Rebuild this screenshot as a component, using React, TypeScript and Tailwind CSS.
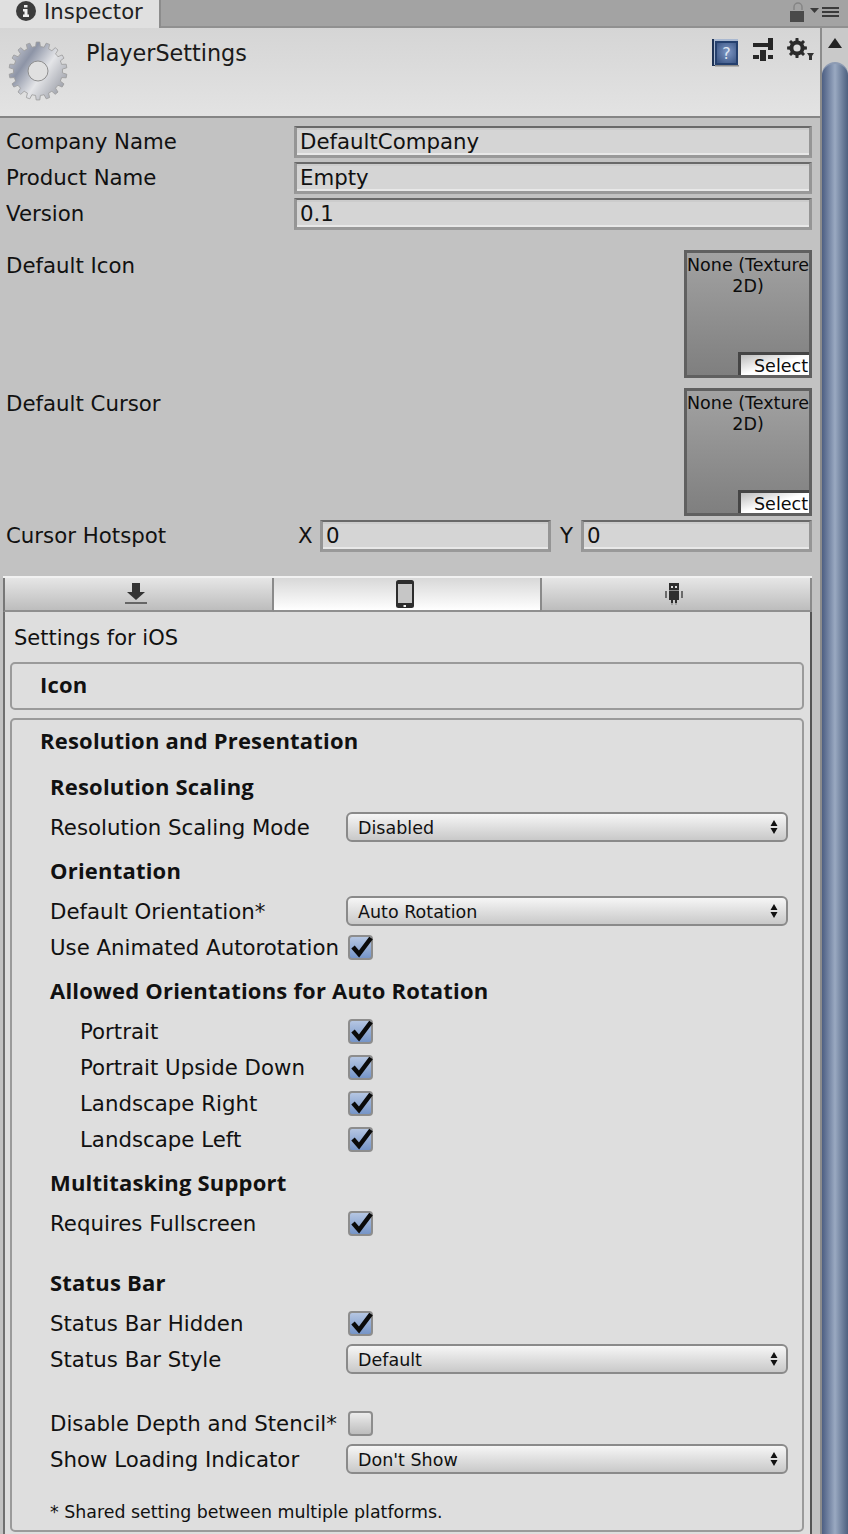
const font = { fontFamily: '"DejaVu Sans", sans-serif' };
const boldFont = { fontFamily: '"Open Sans", "DejaVu Sans", sans-serif' };

// gear outline, teeth around a ring
function gearPath(cx: number, cy: number, outer: number, inner: number, teeth: number) {
  const pts: string[] = [];
  const step = (Math.PI * 2) / teeth;
  for (let i = 0; i < teeth; i++) {
    const a = i * step - Math.PI / 2;
    const list: [number, number][] = [
      [inner, a - step * 0.5],
      [inner, a - step * 0.28],
      [outer, a - step * 0.18],
      [outer, a + step * 0.18],
      [inner, a + step * 0.28],
    ];
    for (const [r, t] of list) {
      pts.push(`${(cx + r * Math.cos(t)).toFixed(2)},${(cy + r * Math.sin(t)).toFixed(2)}`);
    }
  }
  return "M" + pts.join("L") + "Z";
}

function BigGear() {
  return (
    <svg width="60" height="60" viewBox="0 0 60 60">
      <defs>
        <linearGradient id="gearFill" x1="0" y1="0" x2="1" y2="0.7">
          <stop offset="0" stopColor="#d8d9de" />
          <stop offset="0.35" stopColor="#8d94a6" />
          <stop offset="0.65" stopColor="#e4e5e8" />
          <stop offset="1" stopColor="#a0a3ac" />
        </linearGradient>
      </defs>
      <path d={gearPath(30, 30, 29, 24.5, 18)} fill="url(#gearFill)" stroke="#9a9a9a" strokeWidth="0.8" />
      <circle cx="30" cy="30" r="10" fill="#e0e0e0" stroke="#8f8f8f" strokeWidth="1" />
    </svg>
  );
}

function SmallGear() {
  return (
    <svg width="30" height="24" viewBox="0 0 30 24">
      <path d={gearPath(10, 10, 10, 7.5, 8)} fill="#2b2b2b" />
      <circle cx="10" cy="10" r="3.6" fill="#dcdcdc" />
      <path d="M20 15h7l-2 3v4h-3v-4z" fill="#333" />
    </svg>
  );
}

function InfoIcon() {
  return (
    <svg width="22" height="22" viewBox="0 0 22 22">
      <circle cx="11" cy="10" r="10" fill="#3c3c3c" />
      <path d="M9 4h3.500v2.400H9zM8 8h4.500v5.500H14V16H8v-2.500h1.500v-3H8z" fill="#f0f0f0" />
    </svg>
  );
}

function HelpBook() {
  return (
    <svg width="28" height="30" viewBox="0 0 28 30">
      <defs>
        <radialGradient id="bookFill" cx="0.55" cy="0.45" r="0.7">
          <stop offset="0" stopColor="#7e98c6" />
          <stop offset="1" stopColor="#3c5685" />
        </radialGradient>
      </defs>
      <rect x="0" y="1" width="26" height="27" fill="#1f3355" />
      <rect x="2" y="1" width="24" height="26" fill="#a9b8d0" />
      <rect x="3" y="3" width="23" height="24" fill="#25406e" />
      <rect x="5" y="5" width="19" height="20" fill="url(#bookFill)" />
      <text x="14.500" y="21" fontSize="16" textAnchor="middle" fill="#dfe6f0" style={font}>?</text>
      <rect x="3" y="27" width="24" height="1.500" fill="#8a8a8a" />
    </svg>
  );
}

function SlidersIcon() {
  return (
    <svg width="20" height="24" viewBox="0 0 20 24">
      <path d="M0 5h15v4H0zM15 0h5v12h-5zM0 17h6v4H0zM15 17h5v4h-5zM7 12h6v11H7z" fill="#262626" />
    </svg>
  );
}

function LockIcon() {
  return (
    <svg width="16" height="20" viewBox="0 0 16 20">
      <path d="M5 8V5a4 4 0 0 1 8 0v3" fill="none" stroke="#858585" strokeWidth="1.500" />
      <rect x="1" y="9" width="14" height="11" fill="#4a4a4a" />
    </svg>
  );
}

function MenuIcon() {
  return (
    <svg width="30" height="12" viewBox="0 0 30 12">
      <path d="M0 2h9L4.500 7z" fill="#3a3a3a" />
      <path d="M12 1h17v2H12zM12 5h17v2H12zM12 9h17v2H12z" fill="#3a3a3a" />
    </svg>
  );
}

function DownloadIcon() {
  return (
    <svg width="24" height="24" viewBox="0 0 24 24">
      <path d="M8 1h8v9h5l-9 8-9-8h5z" fill="#333" />
      <rect x="1" y="20" width="22" height="2" fill="#666" />
    </svg>
  );
}

function PhoneIcon() {
  return (
    <svg width="20" height="30" viewBox="0 0 20 30">
      <rect x="1" y="1" width="18" height="28" rx="2.500" fill="#2d2d2d" />
      <rect x="3" y="5" width="14" height="19" fill="#c6c6c6" />
      <rect x="8.500" y="26" width="2.500" height="2" fill="#f2f2f2" />
    </svg>
  );
}

function AndroidIcon() {
  return (
    <svg width="18" height="22" viewBox="0 0 18 22" shapeRendering="crispEdges">
      <rect x="4" y="0" width="10" height="7" fill="#2e2e2e" />
      <rect x="6" y="3" width="2" height="2" fill="#e0e0e0" />
      <rect x="10" y="3" width="2" height="2" fill="#e0e0e0" />
      <rect x="4" y="7" width="10" height="1" fill="#8a8a8a" />
      <rect x="4" y="8" width="10" height="9" fill="#2e2e2e" />
      <rect x="0" y="8" width="2" height="7" fill="#6a6a6a" />
      <rect x="16" y="8" width="2" height="7" fill="#6a6a6a" />
      <rect x="6" y="17" width="2" height="3" fill="#2e2e2e" />
      <rect x="10" y="17" width="2" height="3" fill="#2e2e2e" />
      <rect x="6" y="20" width="2" height="2" fill="#a0a0a0" />
      <rect x="10" y="20" width="2" height="2" fill="#a0a0a0" />
    </svg>
  );
}

function Field({ value, className }: { value: string; className: string }) {
  return (
    <div className={`h-8 border-[3px] border-t-2 border-t-[#696969] border-x-[#959595] border-b-[#999999] bg-[#d5d5d5] shadow-[inset_0_-2px_0_#e8e8e8,inset_0_2px_0_#cccccc] pl-[3px] flex items-center text-[21.3px] leading-[24px] text-[#111] ${className}`}>
      {value}
    </div>
  );
}

function ObjectPicker() {
  return (
    <div className="w-32 h-32 border-[3px] border-[#606060] bg-gradient-to-b from-[#a2a2a2] to-[#7f7f7f] flex flex-col text-[17.5px] leading-[21px] text-center text-[#0c0c0c] relative overflow-hidden">
      <div className="pt-[2px] whitespace-nowrap">None (Texture</div>
      <div>2D)</div>
      <div className="absolute right-0 bottom-0 w-[71px] h-[23px] border-t-[3px] border-l-[3px] border-[#454545] bg-gradient-to-br from-[#bdbdbd] via-white to-white pl-[13px] text-left leading-[22px]">Select</div>
    </div>
  );
}

function Check({ on = true }: { on?: boolean }) {
  return (
    <div className={`w-[25px] h-[25px] ml-[2px] rounded-[4px] border-2 border-[#8d8d8d] relative ${on ? "bg-gradient-to-b from-[#b5c6e2] to-[#7695c8]" : "bg-gradient-to-b from-[#ececec] to-[#bdbdbd]"}`}>
      {on && (
        <svg className="absolute left-[-2px] top-[-2px] overflow-visible" width="26" height="25" viewBox="0 0 26 25">
          <path d="M5 12l6 7L23 3" fill="none" stroke="#0a0a0a" strokeWidth="4.500" />
        </svg>
      )}
    </div>
  );
}

function Select({ value }: { value: string }) {
  return (
    <div className="w-[442px] h-[30px] rounded-[6px] border-2 border-[#8a8a8a] bg-gradient-to-b from-[#f6f6f6] to-[#c9c9c9] pl-[10px] pr-[8px] flex items-center justify-between text-[17.5px] text-[#111]">
      <span className="pt-[2px]">{value}</span>
      <svg width="8" height="14" viewBox="0 0 8 14">
        <path d="M4 0l3.500 6H.5zM.5 8h7L4 14z" fill="#111" />
      </svg>
    </div>
  );
}

function Row({ label, indent, children }: { label: string; indent?: boolean; children: React.ReactNode }) {
  return (
    <div className={`h-9 flex items-center text-[21.3px] text-[#111] ${indent ? "pl-[30px]" : ""}`}>
      <div className={`whitespace-nowrap pt-[2px] ${indent ? "w-[266px]" : "w-[296px]"}`}>{label}</div>
      {children}
    </div>
  );
}

function Heading({ text, className = "" }: { text: string; className?: string }) {
  return (
    <div className={`h-9 mb-1 pb-[2px] flex items-center font-bold text-[22px] tracking-[0.2px] text-[#111] ${className}`} style={boldFont}>
      {text}
    </div>
  );
}

export default function App() {
  return (
    <div className="w-[848px] h-[1534px] overflow-hidden flex flex-col bg-[#c2c2c2]" style={font}>
      {/* window tab strip */}
      <div className="h-7 shrink-0 flex justify-between bg-[#a3a3a3] border-b-2 border-[#909090]">
        <div className="w-[161px] h-[28px] flex items-center gap-[7px] pl-[15px] pb-[4px] bg-[#e0e0e0] border-r-2 border-[#8c8c8c] text-[21.200px] text-[#222]">
          <InfoIcon />
          <span>Inspector</span>
        </div>
        <div className="flex items-center gap-[5px] pr-[8px] pb-[2px]">
          <LockIcon />
          <MenuIcon />
        </div>
      </div>

      <div className="flex-1 flex min-h-0">
        <div className="w-[820px] shrink-0">
          {/* asset header */}
          <div className="h-[90px] relative border-b-2 border-[#858585] bg-gradient-to-b from-[#d5d5d5] to-[#e3e3e3] pl-[8px] pt-[13px]">
            <BigGear />
            <div className="absolute left-[86px] top-[9px] text-[22.300px] text-[#1a1a1a]">PlayerSettings</div>
            <div className="absolute right-[3px] top-[10px] flex items-start gap-[13px]">
              <HelpBook />
              <SlidersIcon />
              <div className="pl-[1px]"><SmallGear /></div>
            </div>
          </div>

          {/* common settings */}
          <div className="h-[458px] pl-[6px] pr-2 pt-2 text-[21.3px] leading-[28px] text-[#111]">
            <div className="flex items-center mb-1">
              <div className="w-[288px]">Company Name</div>
              <Field value="DefaultCompany" className="flex-1" />
            </div>
            <div className="flex items-center mb-1">
              <div className="w-[288px]">Product Name</div>
              <Field value="Empty" className="flex-1" />
            </div>
            <div className="flex items-center">
              <div className="w-[288px]">Version</div>
              <Field value="0.1" className="flex-1" />
            </div>

            <div className="flex justify-between mt-5">
              <div className="pt-[2px]">Default Icon</div>
              <ObjectPicker />
            </div>
            <div className="flex justify-between mt-[10px]">
              <div className="pt-[2px]">Default Cursor</div>
              <ObjectPicker />
            </div>

            <div className="flex items-center mt-1">
              <div className="w-[292px]">Cursor Hotspot</div>
              <div className="w-[22px]">X</div>
              <Field value="0" className="w-[231px]" />
              <div className="w-[30px] pl-[9px]">Y</div>
              <Field value="0" className="w-[231px]" />
            </div>
          </div>

          {/* platform tabs */}
          <div className="ml-[3px] w-[809px] h-9 flex border-t-2 border-[#f1f1f1]">
            <div className="w-[271px] h-[34px] pr-[6px] flex items-center justify-center border-l-2 border-r-2 border-b-2 border-l-[#777] border-r-[#8a8a8a] border-b-[#8f8f8f] bg-gradient-to-b from-[#e6e6e6] to-[#bdbdbd]">
              <DownloadIcon />
            </div>
            <div className="w-[266px] h-[34px] pr-[5px] flex items-center justify-center border-b-2 border-[#8f8f8f] bg-gradient-to-b from-[#d8d8d8] to-white">
              <PhoneIcon />
            </div>
            <div className="w-[272px] h-[34px] pr-[4px] flex items-center justify-center border-l-2 border-r-2 border-b-2 border-l-[#8a8a8a] border-r-[#8a8a8a] border-b-[#8f8f8f] bg-gradient-to-b from-[#e6e6e6] to-[#bdbdbd]">
              <AndroidIcon />
            </div>
          </div>

          {/* iOS panel */}
          <div className="ml-[3px] w-[809px] h-[922px] border-x-2 border-l-[#6f6f6f] border-r-[#555] bg-[#dedede] pl-[5px] pr-[6px] overflow-hidden">
            <div className="h-[50px] pl-[4px] pt-[9px] text-[21px] leading-[34px] text-[#111]">Settings for iOS</div>
            <div className="w-[794px] h-[48px] rounded-[5px] border-2 border-[#9a9a9a] pl-[28px] pb-[4px] flex items-center font-bold text-[22px] tracking-[0.2px] text-[#111]" style={boldFont}>Icon</div>

            <div className="w-[794px] h-[814px] mt-2 rounded-[5px] border-2 border-[#9a9a9a] pl-[38px] pr-[14px]">
              <Heading text="Resolution and Presentation" className="-ml-[10px] mt-[3px] mb-[10px]" />
              <Heading text="Resolution Scaling" />
              <Row label="Resolution Scaling Mode"><Select value="Disabled" /></Row>
              <Heading text="Orientation" className="mt-2" />
              <Row label="Default Orientation*"><Select value="Auto Rotation" /></Row>
              <Row label="Use Animated Autorotation"><Check /></Row>
              <Heading text="Allowed Orientations for Auto Rotation" className="mt-2" />
              <Row indent label="Portrait"><Check /></Row>
              <Row indent label="Portrait Upside Down"><Check /></Row>
              <Row indent label="Landscape Right"><Check /></Row>
              <Row indent label="Landscape Left"><Check /></Row>
              <Heading text="Multitasking Support" className="mt-2" />
              <Row label="Requires Fullscreen"><Check /></Row>
              <Heading text="Status Bar" className="mt-6" />
              <Row label="Status Bar Hidden"><Check /></Row>
              <Row label="Status Bar Style"><Select value="Default" /></Row>
              <div className="mt-7">
                <Row label="Disable Depth and Stencil*"><Check on={false} /></Row>
              </div>
              <Row label="Show Loading Indicator"><Select value="Don't Show" /></Row>
              <div className="mt-[24px] text-[17.4px] leading-[22px] text-[#111]">* Shared setting between multiple platforms.</div>
            </div>
          </div>
        </div>

        {/* scrollbar */}
        <div className="flex-1 flex flex-col items-end border-l-2 border-[#8c8c8c] bg-[#c9c9c9]">
          <div className="h-[34px] w-full flex items-center justify-center pb-[4px]">
            <svg width="14" height="10" viewBox="0 0 14 10">
              <path d="M7 0l7 10H0z" fill="#222" />
            </svg>
          </div>
          <div className="flex-1 w-[26px] rounded-t-[13px] border-t-2 border-[#8d9bb3] bg-gradient-to-r from-[#4d5f83] via-[#9aa9c1] to-[#4e6180]" />
        </div>
      </div>
    </div>
  );
}
